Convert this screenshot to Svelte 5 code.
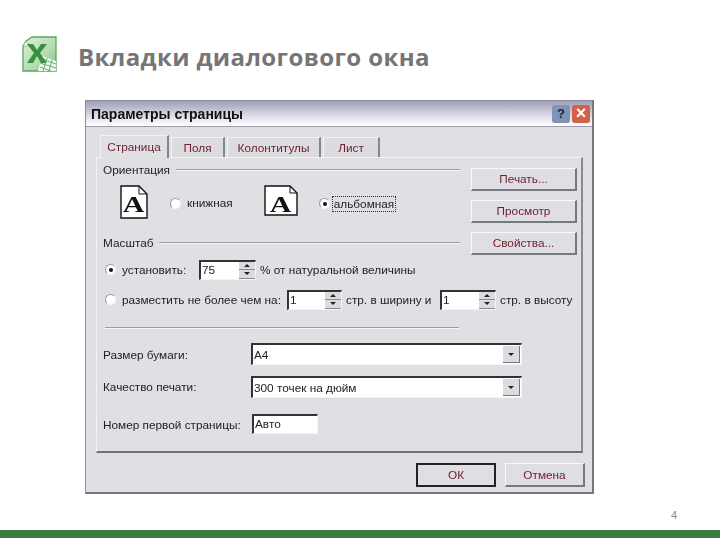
<script lang="ts">
  const tabs = ['Страница', 'Поля', 'Колонтитулы', 'Лист'];
</script>

{#snippet spin(value, width)}
  <span class="field spin" style="width: {width}px">
    <span class="value">{value}</span>
    <span class="arrows">
      <span class="arrow"><i class="up"></i></span>
      <span class="arrow"><i class="down"></i></span>
    </span>
  </span>
{/snippet}

{#snippet combo(value)}
  <span class="field combo">
    <span class="value">{value}</span>
    <span class="drop"><i class="down"></i></span>
  </span>
{/snippet}

<div class="slide">
  <header class="head">
    <svg class="logo" width="37" height="37" viewBox="0 0 37 37">
      <defs>
        <linearGradient id="sheet" x1="0" y1="0" x2="1" y2="1">
          <stop offset="0" stop-color="#dcefd8" />
          <stop offset="0.6" stop-color="#b4dcae" />
          <stop offset="1" stop-color="#7dbd80" />
        </linearGradient>
      </defs>
      <path d="M5 5 L11 1 L35 1 L35 35 L2 35 L2 10 Z" fill="url(#sheet)" stroke="#5aa563" stroke-width="1.3" />
      <path d="M5 5 L9 10 L2 10 Z" fill="#f4faf2" stroke="#7bbb80" stroke-width="0.8" />
      <path d="M21 20 L35 25 L35 35 L17 35 Z" fill="#f1f8ef" />
      <path d="M21 23 L35 28 M19 27 L35 32 M19 31 L30 35 M26 22 L22 35 M31 24 L28 35" stroke="#6aae72" stroke-width="1" fill="none" />
      <path d="M6 8 L12 8 L16 14 L20 8 L26 8 L19 17 L26 27 L20 27 L16 20 L12 27 L6 27 L13 17 Z" fill="#3b8f42" />
    </svg>
    <h1>Вкладки диалогового окна</h1>
  </header>

  <div class="dialog">
    <div class="titlebar">
      <span class="title">Параметры страницы</span>
      <span class="winbtn help">?</span>
      <span class="winbtn close">×</span>
    </div>

    <div class="tabs">
      {#each tabs as tab, i}
        <span class="tab" class:active={i === 0}>{tab}</span>
      {/each}
    </div>

    <div class="panel">
      <div class="top">
        <div class="groups">
          <div class="legend">Ориентация<span class="rule"></span></div>
          <div class="orient">
            <svg class="page portrait" width="28" height="34" viewBox="0 0 28 34">
              <path d="M1 1 H19 L27 9 V33 H1 Z" fill="#fff" stroke="#111" stroke-width="1.4" />
              <path d="M19 1 V9 H27" fill="none" stroke="#111" />
              <text transform="translate(13.5 27) scale(1.25 1)" class="big">A</text>
            </svg>
            <span class="radio"></span>
            <span class="opt narrow">книжная</span>
            <svg class="page landscape" width="34" height="31" viewBox="0 0 34 31">
              <path d="M1 1 H26 L33 8 V30 H1 Z" fill="#fff" stroke="#111" stroke-width="1.4" />
              <path d="M26 1 V8 H33" fill="none" stroke="#111" />
              <text transform="translate(16.5 27) scale(1.25 1)" class="big">A</text>
            </svg>
            <span class="radio on"></span>
            <span class="opt focus">альбомная</span>
          </div>
          <div class="legend scale">Масштаб<span class="rule"></span></div>
        </div>
        <div class="side">
          <span class="btn">Печать...</span>
          <span class="btn">Просмотр</span>
          <span class="btn">Свойства...</span>
        </div>
      </div>

      <div class="row first">
        <span class="radio on"></span>
        <span class="lbl w-set">установить:</span>
        {@render spin('75', 57)}
        <span class="lbl">% от натуральной величины</span>
      </div>
      <div class="row second">
        <span class="radio"></span>
        <span class="lbl w-fit">разместить не более чем на:</span>
        {@render spin('1', 55)}
        <span class="lbl w-wide">стр. в ширину и</span>
        {@render spin('1', 56)}
        <span class="lbl">стр. в высоту</span>
      </div>
      <div class="sep"></div>

      <div class="form">
        <span class="lbl paper">Размер бумаги:</span>
        {@render combo('А4')}
        <span class="lbl">Качество печати:</span>
        {@render combo('300 точек на дюйм')}
        <span class="lbl last">Номер первой страницы:</span>
        <span class="field auto"><span class="value">Авто</span></span>
      </div>
    </div>

    <div class="footer">
      <span class="btn ok">ОК</span>
      <span class="btn">Отмена</span>
    </div>
  </div>

  <div class="pagenum">4</div>
  <div class="bar"></div>
</div>

<style>
  :global(body) {
    margin: 0;
    background: #fff;
  }
  .slide {
    width: 720px;
    height: 540px;
    display: flex;
    flex-direction: column;
    overflow: hidden;
    font-family: "Liberation Sans", Arial, sans-serif;
  }
  .head {
    height: 100px;
    flex: none;
    display: flex;
    align-items: flex-start;
    padding: 36px 0 0 21px;
    box-sizing: border-box;
  }
  .logo {
    flex: none;
    margin-right: 20px;
    filter: blur(0.5px);
  }
  h1 {
    margin: 3px 0 0;
    font: bold 24px/36px "Open Sans", sans-serif;
    letter-spacing: 0.4px;
    color: #757575;
  }

  .dialog {
    width: 509px;
    height: 394px;
    flex: none;
    margin-left: 85px;
    box-sizing: border-box;
    border: 1px solid #8e8e96;
    border-right: 2px solid #77777f;
    border-bottom: 2px solid #77777f;
    background: #e0e0e4;
    display: flex;
    flex-direction: column;
    font-size: 11.8px;
    color: #222;
    filter: blur(0.45px);
  }
  .titlebar {
    height: 25px;
    flex: none;
    display: flex;
    align-items: center;
    gap: 2px;
    padding: 0 2px 0 5px;
    border-bottom: 1px solid #9a9aa8;
    background: linear-gradient(#9d9db8, #d8d8e4 55%, #fff);
  }
  .title {
    flex: 1;
    font-size: 14px;
    font-weight: bold;
    color: #111;
  }
  .winbtn {
    width: 18px;
    height: 18px;
    border-radius: 3px;
    display: flex;
    align-items: center;
    justify-content: center;
    font-weight: bold;
    font-size: 13px;
    color: #fff;
  }
  .help {
    background: #7f93b8;
    color: #222;
  }
  .close {
    background: #d2604a;
    font-size: 18px;
  }

  .tabs {
    height: 22px;
    flex: none;
    display: flex;
    align-items: flex-end;
    gap: 2px;
    margin-top: 8px;
    padding-left: 14px;
  }
  .tab {
    height: 20px;
    box-sizing: border-box;
    display: flex;
    align-items: center;
    justify-content: center;
    border-top: 1px solid #f2f2f4;
    border-left: 1px solid #f2f2f4;
    border-right: 2px solid #85858c;
    color: #6d2230;
    background: #dcdce0;
  }
  .tab:nth-child(1) { width: 69px; }
  .tab:nth-child(2) { width: 54px; }
  .tab:nth-child(3) { width: 94px; }
  .tab:nth-child(4) { width: 57px; }
  .tab.active {
    height: 23px;
    margin-bottom: -1px;
    position: relative;
    z-index: 1;
    background: #e0e0e4;
    padding-bottom: 1px;
  }

  .panel {
    height: 296px;
    flex: none;
    box-sizing: border-box;
    margin: 0 9px 0 10px;
    border-top: 1px solid #f4f4f6;
    border-left: 1px solid #f4f4f6;
    border-right: 2px solid #8a8a92;
    border-bottom: 2px solid #70707a;
    padding-left: 6px;
  }
  .top {
    display: flex;
    height: 101px;
  }
  .groups {
    width: 357px;
    padding-top: 5px;
  }
  .legend {
    display: flex;
    align-items: center;
    height: 14px;
    gap: 6px;
  }
  .rule {
    flex: 1;
    height: 0;
    border-top: 1px solid #9c9ca4;
    border-bottom: 1px solid #f6f6f8;
  }
  .orient {
    height: 52px;
    display: flex;
    align-items: center;
    padding-left: 17px;
  }
  .big {
    font: bold 24px "Liberation Serif", serif;
    text-anchor: middle;
    fill: #111;
  }
  .portrait {
    margin-right: 22px;
    margin-bottom: 3px;
  }
  .landscape {
    margin-right: 21px;
    margin-bottom: 6px;
  }
  .radio {
    width: 11px;
    height: 11px;
    flex: none;
    border-radius: 50%;
    box-sizing: border-box;
    background: #fff;
    border: 1px solid #9a9aa2;
    border-right-color: #f4f4f6;
    border-bottom-color: #f4f4f6;
    position: relative;
  }
  .radio.on::after {
    content: '';
    position: absolute;
    left: 3px;
    top: 3px;
    width: 4px;
    height: 4px;
    border-radius: 50%;
    background: #111;
  }
  .opt {
    margin-left: 6px;
  }
  .narrow {
    width: 48px;
    margin-right: 29px;
    white-space: nowrap;
  }
  .focus {
    outline: 1px dotted #333;
    box-sizing: border-box;
    width: 62px;
    height: 14px;
    line-height: 14px;
    text-align: center;
    white-space: nowrap;
    margin-left: 3px;
    margin-top: 2px;
  }
  .scale {
    margin-top: 7px;
  }
  .side {
    display: flex;
    flex-direction: column;
    gap: 9px;
    margin-left: 11px;
    padding-top: 10px;
  }
  .btn {
    width: 106px;
    height: 23px;
    box-sizing: border-box;
    display: flex;
    align-items: center;
    justify-content: center;
    color: #6d2230;
    background: #dfdfe3;
    border-top: 1px solid #f8f8fa;
    border-left: 1px solid #f8f8fa;
    border-right: 2px solid #77777f;
    border-bottom: 2px solid #77777f;
  }

  .row {
    display: flex;
    align-items: center;
    padding-left: 2px;
    height: 21px;
    white-space: nowrap;
  }
  .row .radio {
    margin-right: 6px;
  }
  .second {
    margin-top: 9px;
  }
  .w-set {
    width: 77px;
    flex: none;
  }
  .w-fit {
    width: 165px;
    flex: none;
  }
  .w-wide {
    width: 94px;
    flex: none;
  }
  .row .field {
    margin-right: 4px;
    height: 20px;
  }
  .field {
    display: flex;
    box-sizing: border-box;
    background: #fff;
    border-top: 2px solid #333;
    border-left: 2px solid #333;
    border-right: 1px solid #f4f4f6;
    border-bottom: 1px solid #f4f4f6;
    height: 21px;
    align-items: center;
  }
  .value {
    flex: 1;
    padding-left: 1px;
    color: #222;
  }
  .arrows {
    width: 16px;
    align-self: stretch;
    display: flex;
    flex-direction: column;
  }
  .arrow {
    flex: 1;
    display: flex;
    align-items: center;
    justify-content: center;
    background: #dcdce0;
    border-bottom: 1px solid #8a8a92;
  }
  i {
    width: 0;
    height: 0;
    border-left: 3px solid transparent;
    border-right: 3px solid transparent;
  }
  i.up {
    border-bottom: 3px solid #222;
  }
  i.down {
    border-top: 3px solid #222;
  }

  .sep {
    width: 354px;
    margin: 17px 0 0 2px;
    border-top: 1px solid #9c9ca4;
    border-bottom: 1px solid #f6f6f8;
  }
  .form {
    display: grid;
    grid-template-columns: 148px 271px;
    grid-template-rows: 22px 22px 20px;
    row-gap: 11px;
    align-items: center;
    margin-top: 14px;
  }
  .form .paper {
    padding-top: 2px;
  }
  .form .last {
    margin-top: 11px;
  }
  .combo {
    height: 22px;
  }
  .drop {
    width: 16px;
    align-self: stretch;
    margin: 1px;
    display: flex;
    align-items: center;
    justify-content: center;
    background: #dcdce0;
    border-right: 1px solid #77777f;
    border-bottom: 1px solid #77777f;
  }
  .auto {
    width: 66px;
    height: 20px;
    margin: 9px 0 0 1px;
  }

  .footer {
    display: flex;
    justify-content: flex-end;
    gap: 9px;
    margin-top: 10px;
    padding-right: 7px;
  }
  .footer .btn {
    width: 80px;
    height: 24px;
  }
  .footer .ok {
    border: 2px solid #222;
  }

  .pagenum {
    height: 36px;
    flex: none;
    box-sizing: border-box;
    padding: 14px 43px 0 0;
    text-align: right;
    font-size: 11px;
    line-height: 14px;
    color: #8a8a8a;
  }
  .bar {
    height: 8px;
    flex: none;
    background: #3d7a45;
  }
</style>
